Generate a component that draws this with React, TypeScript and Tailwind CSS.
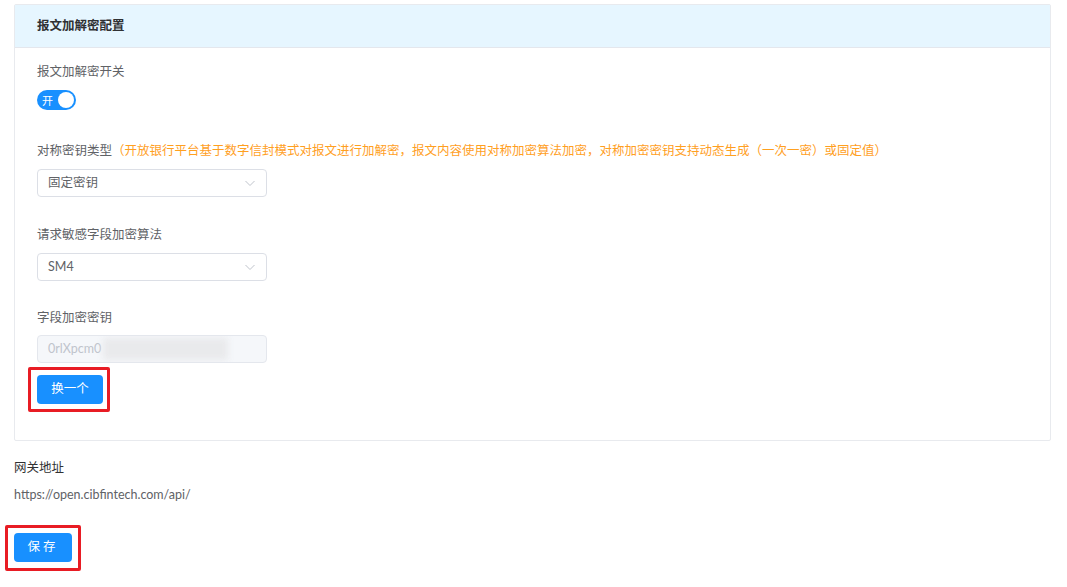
import React from "react";

const font = { fontFamily: 'Lato, "Noto Sans CJK SC", "Noto Sans", sans-serif' };

function Chevron() {
  return (
    <svg width="12" height="12" viewBox="0 0 12 12" className="text-[#c0c4cc]">
      <path d="M1.5 4 L6 8.5 L10.5 4" fill="none" stroke="currentColor" strokeWidth="1" />
    </svg>
  );
}

function Select({ value }: { value: string }) {
  return (
    <div className="w-[230px] h-[28px] border border-[#dcdfe6] rounded-[4px] flex items-center justify-between pl-[10px] pr-[10px] text-[12.5px] text-[#606266] bg-white">
      <span>{value}</span>
      <Chevron />
    </div>
  );
}

const App = () => {
  return (
    <main className="w-[1067px] h-[587px] bg-white pt-[4px] pl-[14px] text-[#606266]" style={font}>
      <section className="w-[1037px] border border-[#e8eaee] rounded-[2px]">
        <div className="h-[43px] bg-[#e6f6ff] border-b border-[#e4e7ed] flex items-center pl-[22px] text-[12.5px] font-bold text-[#303133]">
          报文加解密配置
        </div>
        <div className="pl-[22px] pt-[14px] pb-[36px]">
          <div className="text-[12.5px] leading-[20px]">报文加解密开关</div>
          <div className="mt-[8px] w-[39px] h-[20px] rounded-full bg-[#1890ff] flex items-center justify-between pl-[5px] pr-[2px]">
            <span className="text-white text-[11px] leading-none">开</span>
            <span className="w-[16px] h-[16px] rounded-full bg-white" />
          </div>

          <div className="mt-[31px] text-[12.5px] leading-[20px]">
            对称密钥类型
            <span className="text-[#ffa01f]">
              （开放银行平台基于数字信封模式对报文进行加解密，报文内容使用对称加密算法加密，对称加密密钥支持动态生成（一次一密）或固定值）
            </span>
          </div>
          <div className="mt-[8px]">
            <Select value="固定密钥" />
          </div>

          <div className="mt-[28px] text-[12.5px] leading-[20px]">请求敏感字段加密算法</div>
          <div className="mt-[8px]">
            <Select value="SM4" />
          </div>

          <div className="mt-[27px] text-[12.5px] leading-[20px]">字段加密密钥</div>
          <div className="mt-[7px] w-[230px] h-[28px] border border-[#e4e7ed] rounded-[4px] bg-[#f5f7fa] flex items-center pl-[10px] text-[12.5px] text-[#c0c4cc] overflow-hidden">
            <span>0rlXpcm0</span>
            <span className="ml-[2px] w-[125px] h-[22px] bg-[#e9eaec] blur-[3px]" />
          </div>
          <div className="relative inline-block mt-[12px]">
            <button className="w-[66px] h-[29px] rounded-[4px] bg-[#1890ff] text-white text-[12.5px]">
              换一个
            </button>
            <span className="absolute -left-[9px] -top-[8px] -right-[7px] -bottom-[8px] border-[3px] border-[#e81c24] rounded-[2px]" />
          </div>
        </div>
      </section>

      <div className="mt-[17px] text-[12.5px] leading-[20px] text-[#303133]">网关地址</div>
      <div className="mt-[7px] text-[12.5px] leading-[20px]">https://open.cibfintech.com/api/</div>
      <div className="relative inline-block mt-[28px]">
        <button className="w-[58px] h-[29px] rounded-[4px] bg-[#1890ff] text-white text-[12.5px] tracking-[3px]">
          保存
        </button>
        <span className="absolute -left-[9px] -top-[8px] -right-[9px] -bottom-[9px] border-[3px] border-[#e81c24] rounded-[2px]" />
      </div>
    </main>
  );
};

export default App;
